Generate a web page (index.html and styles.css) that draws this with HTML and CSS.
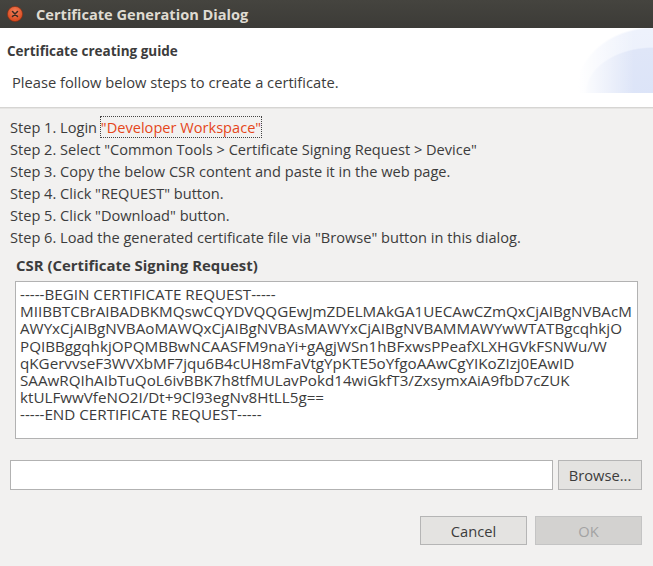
FILE: index.html
```html
<!DOCTYPE html>
<html>
<head>
<meta charset="utf-8">
<link rel="stylesheet" href="styles.css">
<title>Certificate Generation Dialog</title>
</head>
<body>
<div class="window">
  <div class="titlebar">
    <span class="close-btn">
      <svg width="16" height="16" viewBox="0 0 16 16">
        <defs>
          <radialGradient id="cg" cx="50%" cy="35%" r="65%">
            <stop offset="0" stop-color="#f4805a"/>
            <stop offset="1" stop-color="#d6461b"/>
          </radialGradient>
        </defs>
        <circle cx="8" cy="8" r="7.6" fill="url(#cg)" stroke="#8a2e10" stroke-width="0.6"/>
        <path d="M5.5 5.5 L10.5 10.5 M10.5 5.5 L5.5 10.5" stroke="#3a2a22" stroke-width="1.5" stroke-linecap="round"/>
      </svg>
    </span>
    <span class="title-text">Certificate Generation Dialog</span>
  </div>
  <div class="header">
    <div class="header-title">Certificate creating guide</div>
    <div class="header-msg">Please follow below steps to create a certificate.</div>
  </div>
  <div class="content">
    <div class="steps">
      <div class="step">Step 1. Login <span class="link">"Developer Workspace"</span></div>
      <div class="step">Step 2. Select "Common Tools &gt; Certificate Signing Request &gt; Device"</div>
      <div class="step">Step 3. Copy the below CSR content and paste it in the web page.</div>
      <div class="step">Step 4. Click "REQUEST" button.</div>
      <div class="step">Step 5. Click "Download" button.</div>
      <div class="step">Step 6. Load the generated certificate file via "Browse" button in this dialog.</div>
    </div>
    <div class="csr-label">CSR (Certificate Signing Request)</div>
    <div class="csr-box">-----BEGIN CERTIFICATE REQUEST-----
MIIBBTCBrAIBADBKMQswCQYDVQQGEwJmZDELMAkGA1UECAwCZmQxCjAIBgNVBAcM
AWYxCjAIBgNVBAoMAWQxCjAIBgNVBAsMAWYxCjAIBgNVBAMMAWYwWTATBgcqhkjO
PQIBBggqhkjOPQMBBwNCAASFM9naYi+gAgjWSn1hBFxwsPPeafXLXHGVkFSNWu/W
qKGervvseF3WVXbMF7jqu6B4cUH8mFaVtgYpKTE5oYfgoAAwCgYIKoZIzj0EAwID
SAAwRQIhAIbTuQoL6ivBBK7h8tfMULavPokd14wiGkfT3/ZxsymxAiA9fbD7cZUK
ktULFwwVfeNO2I/Dt+9Cl93egNv8HtLL5g==
-----END CERTIFICATE REQUEST-----</div>
    <div class="file-row">
      <div class="file-input"></div>
      <div class="btn browse">Browse...</div>
    </div>
    <div class="actions">
      <div class="btn action">Cancel</div>
      <div class="btn action disabled">OK</div>
    </div>
  </div>
</div>
</body>
</html>
```
FILE: styles.css
```css
html, body {
  margin: 0;
  padding: 0;
}
body {
  width: 653px;
  height: 566px;
  background: #f2f1f0;
  font-family: "Open Sans", "Noto Sans", sans-serif;
  color: #3c3c3c;
  overflow: hidden;
}
.window {
  display: flex;
  flex-direction: column;
  height: 566px;
}
.titlebar {
  height: 28px;
  background: linear-gradient(#45443f, #3c3b37);
  display: flex;
  align-items: center;
  padding-left: 7px;
  gap: 13px;
  box-sizing: border-box;
}
.close-btn {
  display: flex;
  width: 16px;
  height: 16px;
  margin-top: -1px;
}
.title-text {
  color: #dfdbd2;
  font-weight: bold;
  font-size: 14.6px;
}
.header {
  height: 80px;
  background-color: #ffffff;
  background-image:
    linear-gradient(90deg, rgba(255,255,255,1) 0, rgba(255,255,255,0) 75%),
    radial-gradient(ellipse 68px 46px at 100% 100%, #dce4f8 0, #dfe6f8 97%, rgba(223,230,248,0) 100%),
    radial-gradient(ellipse 78px 66px at 100% 100%, #eaeffc 0, #eef2fc 97%, rgba(255,255,255,0) 100%);
  background-size: 75px 65px, 75px 65px, 75px 65px;
  background-position: right top, right top, right top;
  background-repeat: no-repeat;
  border-bottom: 1px solid #d6d5d3;
  box-shadow: 0 1px 0 #e6e5e3;
  padding: 13px 0 0 7px;
  box-sizing: border-box;
}
.header-title {
  font-weight: bold;
  font-size: 13.5px;
  line-height: 20px;
}
.header-msg {
  margin-top: 11px;
  padding-left: 5px;
  font-size: 14.7px;
  line-height: 20px;
}
.content {
  padding: 8px 11px 0 10px;
  display: flex;
  flex-direction: column;
}
.step {
  font-size: 14.6px;
  line-height: 22px;
  white-space: nowrap;
}
.link {
  color: #e5461a;
  outline: 1px dotted #444;
  outline-offset: 0;
}
.csr-label {
  font-weight: bold;
  font-size: 14.9px;
  line-height: 22px;
  padding-left: 6px;
  margin-top: 6px;
}
.csr-box {
  margin: 5px 4px 0 5px;
  height: 158px;
  box-sizing: border-box;
  background: #ffffff;
  border: 1px solid #b2b2b2;
  padding: 4px 4px;
  white-space: pre;
  font-size: 15.2px;
  line-height: 17.2px;
  overflow: hidden;
}
.file-row {
  display: flex;
  gap: 5px;
  margin-top: 21px;
  height: 30px;
}
.file-input {
  flex: 1;
  background: #ffffff;
  border: 1px solid #b2b2b2;
}
.btn {
  display: flex;
  align-items: center;
  justify-content: center;
  border: 1px solid #b5b5b5;
  background: #e4e3e1;
  font-size: 14.7px;
  box-sizing: border-box;
}
.browse {
  width: 84px;
}
.actions {
  display: flex;
  justify-content: flex-end;
  gap: 8px;
  margin-top: 26px;
}
.action {
  width: 107px;
  height: 29px;
}
.disabled {
  background: #d3d2d0;
  border-color: #c4c4c4;
  color: #a3a3a3;
}
```
